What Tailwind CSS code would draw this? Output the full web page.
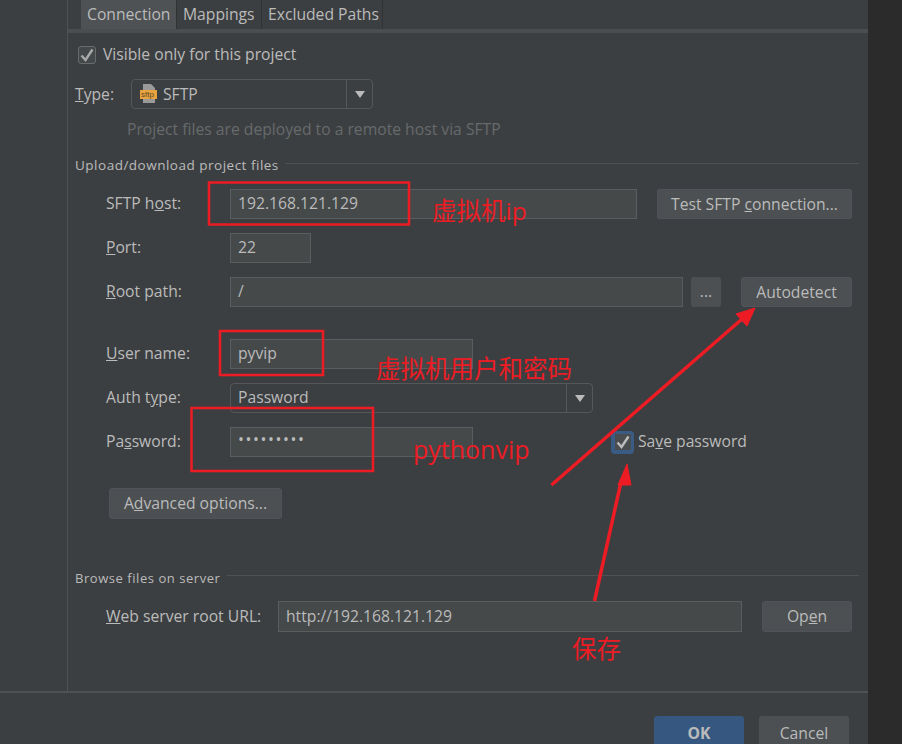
<!doctype html>
<html>
<head>
  <meta charset="UTF-8">
  <meta name="viewport" content="width=device-width, initial-scale=1.0">
  <script src="https://cdn.jsdelivr.net/npm/@tailwindcss/browser@4"></script>
</head>
<body class="bg-[#2b2b2b]">
<div class="relative flex w-[902px] h-[744px] overflow-hidden font-['Open_Sans','Noto_Sans_CJK_SC',sans-serif] text-[15.7px] text-[#bbbbbb]">
  <div class="flex flex-col w-[868px] bg-[#3c3f41]">
    <div class="flex h-[691px] shrink-0">
      <div class="w-[68px] border-r border-[#515151]"></div>
      <div class="flex-1">

        <!-- tabs -->
        <div class="flex h-[29px] pl-[13px] border-b-4 border-[#4a4e50] box-content">
          <div class="w-[96px] pl-[6px] leading-[28px] bg-[#4e5254] border-r border-[#323232]">Connection</div>
          <div class="w-[85px] pl-[6px] leading-[28px] border-r border-[#323232]">Mappings</div>
          <div class="w-[121px] pl-[6px] leading-[28px] border-r border-[#323232]">Excluded Paths</div>
        </div>

        <div class="flex items-center h-[20px] mt-[12px] pl-[10px] gap-[7px]">
          <div class="flex items-center justify-center w-[18px] h-[18px] rounded-[3px] border border-[#6b6b6b] bg-[#43494a]">
            <svg width="14" height="14" viewBox="0 0 14 14"><path d="M1.5 7.5L5.5 12L12.5 1.5" fill="none" stroke="#a9a9a9" stroke-width="2.4"/></svg>
          </div>
          <span class="mb-[1px]">Visible only for this project</span>
        </div>

        <div class="flex items-center h-[30px] mt-[14px] pl-[7px]">
          <span class="w-[56px] mt-[1px]"><u>T</u>ype:</span>
          <div class="flex w-[242px] h-full rounded-[4px] border border-[#555759]">
            <div class="flex flex-1 items-center gap-[5px] pl-[8px]">
              <svg width="18" height="20" viewBox="0 0 18 20">
                <path d="M3 0H11L15 4V19H3Z" fill="#9a9a9a"/>
                <rect x="0" y="6" width="17" height="9" fill="#e8a33d"/>
                <text x="1" y="13" font-size="8" font-family="Liberation Sans" fill="#5a4a30">sftp</text>
              </svg>
              <span class="mt-[1px]">SFTP</span>
            </div>
            <div class="flex items-center justify-center w-[26px] border-l border-[#555759]">
              <div class="w-0 h-0 border-x-[5px] border-x-transparent border-t-[7px] border-t-[#bbbbbb]"></div>
            </div>
          </div>
        </div>

        <p class="mt-[10px] ml-[59px] text-[#666a6c] leading-[20px]">Project files are deployed to a remote host via SFTP</p>

        <div class="flex items-start h-[20px] mt-[16px] pl-[7px]">
          <span class="text-[13.5px] tracking-[0.5px] leading-[20px]">Upload/download project files</span>
          <div class="flex-1 h-px mt-[8px] ml-[7px] mr-[9px] bg-[#515151]"></div>
        </div>

        <!-- host rows -->
        <div class="flex items-center h-[30px] mt-[14px] pl-[38px]">
          <span class="w-[124px] mb-[1px]">SFTP h<u>o</u>st:</span>
          <div class="w-[407px] h-full pl-[7px] leading-[26px] bg-[#45494a] border border-[#5a5d5f]">192.168.121.129</div>
          <div class="flex items-center justify-center w-[195px] h-full ml-[20px] pt-[1px] rounded-[2px] bg-[#4c5052] border border-[#50545a]"><span>Test SFTP <u>c</u>onnection...</span></div>
        </div>
        <div class="flex items-center h-[30px] mt-[14px] pl-[38px]">
          <span class="w-[124px] mb-[1px]"><u>P</u>ort:</span>
          <div class="w-[81px] h-full pl-[7px] leading-[26px] bg-[#45494a] border border-[#5a5d5f]">22</div>
        </div>
        <div class="flex items-center h-[30px] mt-[14px] pl-[38px]">
          <span class="w-[124px] mb-[1px]"><u>R</u>oot path:</span>
          <div class="w-[453px] h-full pl-[7px] leading-[26px] bg-[#45494a] border border-[#5a5d5f]">/</div>
          <div class="flex items-center justify-center w-[30px] h-full ml-[8px] rounded-[3px] bg-[#4c5052]">...</div>
          <div class="flex items-center justify-center w-[111px] h-full ml-[20px] pt-[1px] rounded-[3px] bg-[#4c5052] border border-[#50545a]">Autodetect</div>
        </div>

        <!-- credentials -->
        <div class="flex items-center h-[30px] mt-[32px] pl-[38px]">
          <span class="w-[124px] mb-[1px]"><u>U</u>ser name:</span>
          <div class="w-[243px] h-full pl-[7px] leading-[26px] bg-[#45494a] border border-[#5a5d5f]">pyvip</div>
        </div>
        <div class="flex items-center h-[30px] mt-[14px] pl-[38px]">
          <span class="w-[124px] mb-[1px]">Auth t<u>y</u>pe:</span>
          <div class="flex w-[363px] h-full rounded-[4px] border border-[#555759]">
            <div class="flex-1 pl-[7px] leading-[26px]">Password</div>
            <div class="flex items-center justify-center w-[26px] border-l border-[#555759]">
              <div class="w-0 h-0 border-x-[5px] border-x-transparent border-t-[7px] border-t-[#bbbbbb]"></div>
            </div>
          </div>
        </div>
        <div class="flex items-center h-[30px] mt-[14px] pl-[38px]">
          <span class="w-[124px] mb-[1px]">Pa<u>s</u>sword:</span>
          <div class="w-[243px] h-full pl-[7px] leading-[22px] tracking-[1.6px] bg-[#45494a] border border-[#5a5d5f]">&#8226;&#8226;&#8226;&#8226;&#8226;&#8226;&#8226;&#8226;&#8226;</div>
          <div class="flex items-center justify-center w-[23px] h-[23px] ml-[138px] rounded-[4px] bg-[#3a5b84]">
            <div class="flex items-center justify-center w-[16px] h-[16px] bg-[#4a4d4f]">
              <svg width="14" height="14" viewBox="0 0 14 14"><path d="M1.5 7.5L5.5 12L12.5 1.5" fill="none" stroke="#bdbdbd" stroke-width="2.4"/></svg>
            </div>
          </div>
          <span class="ml-[4px]">Sa<u>v</u>e password</span>
        </div>

        <div class="flex items-center justify-center w-[173px] h-[31px] mt-[31px] ml-[41px] rounded-[3px] bg-[#4c5052] border border-[#50545a]"><span>A<u>d</u>vanced options...</span></div>

        <div class="flex items-start h-[20px] mt-[49px] pl-[7px]">
          <span class="text-[13px] tracking-[0.55px] leading-[20px]">Browse files on server</span>
          <div class="flex-1 h-px mt-[7px] ml-[7px] mr-[9px] bg-[#515151]"></div>
        </div>

        <div class="flex items-center h-[31px] mt-[13px] pl-[38px]">
          <span class="w-[172px]"><u>W</u>eb server root URL:</span>
          <div class="w-[464px] h-full pl-[7px] leading-[29px] bg-[#45494a] border border-[#5a5d5f]">http://192.168.121.129</div>
          <div class="flex items-center justify-center w-[90px] h-full ml-[20px] pt-[1px] rounded-[3px] bg-[#4c5052] border border-[#50545a]"><span>Op<u>e</u>n</span></div>
        </div>
      </div>
    </div>

    <!-- dialog buttons -->
    <div class="flex h-[53px] shrink-0 overflow-hidden justify-end gap-[15px] pt-[23px] pr-[19px] border-t-2 border-[#4f5153]">
      <div class="w-[90px] h-[40px] pt-[6px] text-center font-bold rounded-[3px] bg-[#365880]">OK</div>
      <div class="w-[90px] h-[40px] pt-[6px] text-center rounded-[3px] bg-[#4c5052]">Cancel</div>
    </div>
  </div>

  <!-- red annotations drawn over the screenshot -->
  <svg class="absolute left-0 top-0" width="902" height="744" viewBox="0 0 902 744" fill="none" stroke="#ed1c24">
    <rect x="209" y="182.5" width="200" height="42" stroke-width="2.5"/>
    <rect x="220" y="331" width="103" height="44" stroke-width="2.5"/>
    <rect x="191.5" y="408" width="181.5" height="63" stroke-width="2.5"/>
    <path d="M551.5 485L742 319" stroke-width="3.5"/>
    <path d="M755 308L736 314L747 326Z" fill="#ed1c24" stroke-width="1"/>
    <path d="M594.5 601L621 482" stroke-width="3.5"/>
    <path d="M627 464L618 485L631 485Z" fill="#ed1c24" stroke-width="1"/>
  </svg>
  <span class="absolute left-[432px] top-[194px] text-[24.5px] leading-[34px] text-[#ed1c24]">虚拟机ip</span>
  <span class="absolute left-[376px] top-[352px] text-[24.5px] leading-[34px] text-[#ed1c24]">虚拟机用户和密码</span>
  <span class="absolute left-[413px] top-[432px] text-[25px] leading-[34px] text-[#ed1c24]">pythonvip</span>
  <span class="absolute left-[572px] top-[632px] text-[24.5px] leading-[34px] text-[#ed1c24]">保存</span>
</div>
</body>
</html>
